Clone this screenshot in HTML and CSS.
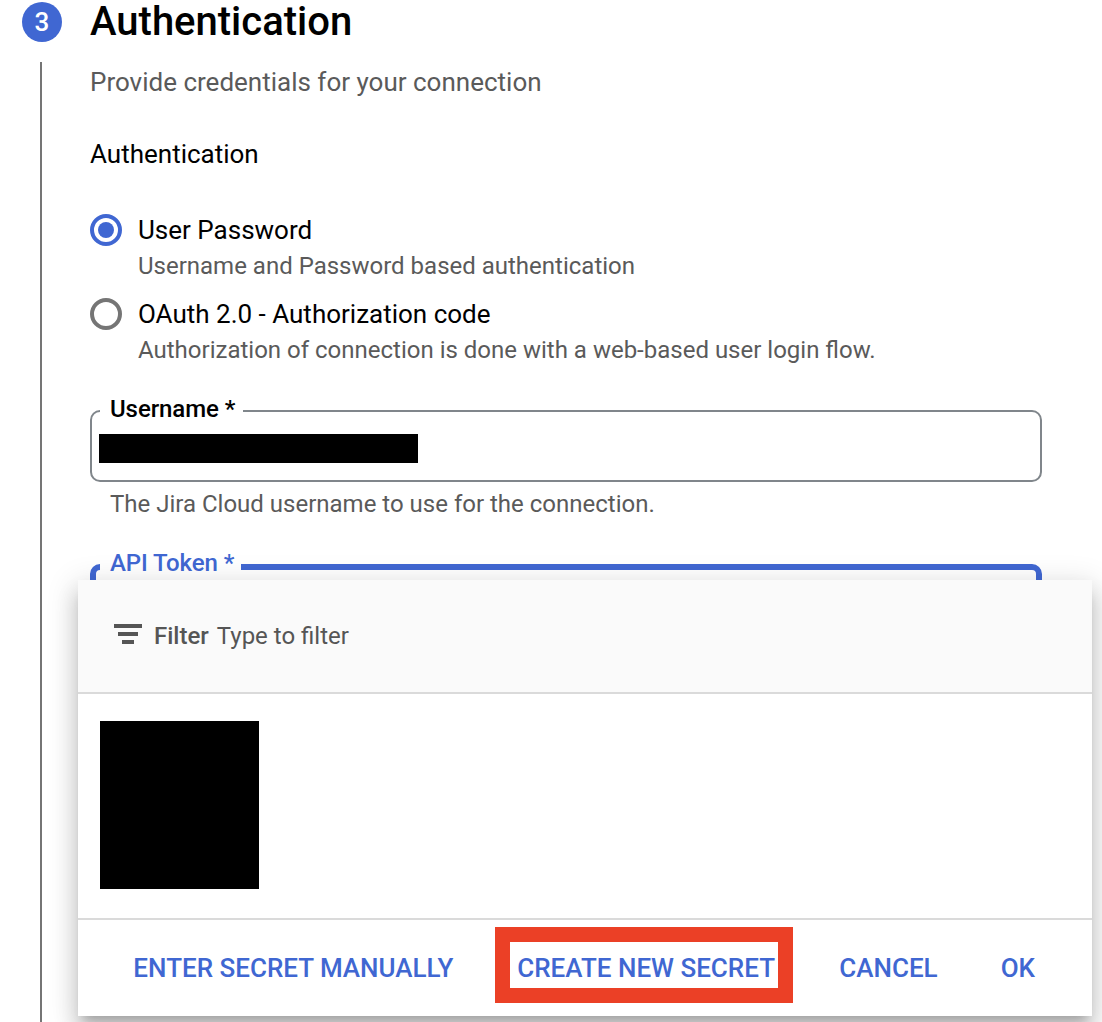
FILE: index.html
```html
<!DOCTYPE html>
<html lang="en">
<head>
<meta charset="utf-8">
<title>Authentication</title>
<link rel="stylesheet" href="styles.css">
</head>
<body>
<div class="page">
  <div class="rail">
    <div class="step">3</div>
    <div class="rail-line"></div>
  </div>
  <main class="content">
    <h1 class="title">Authentication</h1>
    <p class="desc">Provide credentials for your connection</p>
    <h2 class="subtitle">Authentication</h2>
    <div class="options">
      <div class="option">
        <span class="radio checked"></span>
        <div class="option-text">
          <div class="option-label">User Password</div>
          <div class="option-hint">Username and Password based authentication</div>
        </div>
      </div>
      <div class="option">
        <span class="radio"></span>
        <div class="option-text">
          <div class="option-label">OAuth 2.0 - Authorization code</div>
          <div class="option-hint">Authorization of connection is done with a web-based user login flow.</div>
        </div>
      </div>
    </div>
    <fieldset class="field">
      <legend class="legend">Username *</legend>
      <div class="redacted"></div>
    </fieldset>
    <p class="helper">The Jira Cloud username to use for the connection.</p>
    <fieldset class="field focused">
      <legend class="legend">API Token *</legend>
    </fieldset>
  </main>
  <section class="menu">
    <div class="filter">
      <svg class="filter-icon" width="28" height="20" viewBox="0 0 28 20" fill="#555"><path d="M0 0h28v4H0zM4 8h20v4H4zM8 16h12v4H8z"/></svg>
      <span class="filter-name">Filter</span>
      <span class="filter-hint">Type to filter</span>
    </div>
    <div class="list"><div class="redacted-block"></div></div>
    <div class="actions">
      <span class="action enter">ENTER SECRET MANUALLY</span>
      <span class="action create">CREATE NEW SECRET</span>
      <span class="action cancel">CANCEL</span>
      <span class="action">OK</span>
    </div>
  </section>
</div>
</body>
</html>
```
FILE: styles.css
```css
* { box-sizing: border-box; }
body { margin: 0; background: #fff; font-family: Roboto, sans-serif; color: #000; }
.page { position: relative; display: flex; width: 1102px; height: 1022px; overflow: hidden; }
.rail { width: 90px; padding: 2px 0 0 22px; display: flex; flex-direction: column; gap: 20px; }
.step { flex: none; width: 40px; height: 40px; border-radius: 50%; background: #4067d2; color: #fff; font-size: 26px; font-weight: 500; line-height: 40px; text-align: center; }
.rail-line { flex: 1; width: 2px; margin-left: 18px; background: #757575; }
.content { width: 952px; }
.title { margin: 0; height: 44px; line-height: 44px; font-size: 40px; font-weight: 500; }
.desc { margin: 18px 0 0; line-height: 40px; font-size: 26px; color: #5a5a5a; }
.subtitle { margin: 32px 0 0; line-height: 40px; font-size: 26px; font-weight: 400; }
.options { margin-top: 40px; display: flex; flex-direction: column; gap: 16px; }
.option { display: flex; gap: 16px; }
.radio { flex: none; width: 32px; height: 32px; border: 4px solid #757575; border-radius: 50%; display: grid; place-items: center; }
.radio.checked { border-color: #4067d2; }
.radio.checked::before { content: ""; width: 16px; height: 16px; border-radius: 50%; background: #4067d2; }
.option-label { line-height: 32px; font-size: 26px; }
.option-hint { margin-top: 4px; line-height: 32px; font-size: 24px; color: #5a5a5a; }
.field { margin: 33px 0 0; padding: 0 0 0 8px; min-width: 0; height: 83px; border: 2px solid #80868b; border-radius: 10px; }
.legend { width: 143px; height: 24px; padding: 0 0 0 10px; line-height: 20px; font-size: 24px; font-weight: 500; letter-spacing: -.08px; white-space: nowrap; }
.redacted { margin: 11px 0 0 -1px; width: 319px; height: 29px; background: #000; }
.helper { margin: 6px 0 0 20px; line-height: 32px; font-size: 24px; color: #5a5a5a; }
.focused { margin-top: 35px; padding-left: 4px; border: 6px solid #4067d2; }
.focused .legend { width: 141px; line-height: 16px; color: #4067d2; }
.menu { position: absolute; left: 78px; top: 580px; width: 1014px; height: 436px; background: #fff; display: flex; flex-direction: column; box-shadow: 0 10px 10px -6px rgba(0,0,0,.2), 0 16px 20px 2px rgba(0,0,0,.14), 0 6px 28px 4px rgba(0,0,0,.12); }
.filter { height: 114px; padding: 0 36px; background: #fafafa; border-bottom: 2px solid #dadada; display: flex; align-items: center; font-size: 24px; color: #555; }
.filter-icon { margin-top: -4px; }
.filter-name { margin-left: 12px; font-weight: 500; }
.filter-hint { margin-left: 8px; }
.list { height: 226px; border-bottom: 2px solid #dadada; padding: 27px 22px; }
.redacted-block { width: 159px; height: 168px; background: #000; }
.actions { flex: 1; display: flex; align-items: center; justify-content: flex-end; padding-right: 57px; font-size: 26px; font-weight: 500; color: #4067d2; white-space: nowrap; }
.create { display: flex; align-items: center; width: 298px; height: 76px; margin: -6px 46px 0 42px; padding: 6px 0 0 7px; border: 15px solid #eb4026; }
.cancel { margin-right: 63px; }
```
